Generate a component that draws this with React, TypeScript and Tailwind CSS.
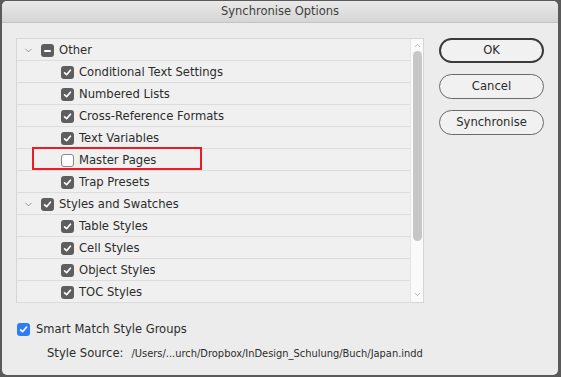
import { ChevronDown, ChevronUp } from 'lucide-react';

type Item = { label: string; checked: boolean };

const groups: { title: string; state: 'mixed' | 'checked'; items: Item[] }[] = [
    {
        title: 'Other',
        state: 'mixed',
        items: [
            { label: 'Conditional Text Settings', checked: true },
            { label: 'Numbered Lists', checked: true },
            { label: 'Cross-Reference Formats', checked: true },
            { label: 'Text Variables', checked: true },
            { label: 'Master Pages', checked: false },
            { label: 'Trap Presets', checked: true },
        ],
    },
    {
        title: 'Styles and Swatches',
        state: 'checked',
        items: [
            { label: 'Table Styles', checked: true },
            { label: 'Cell Styles', checked: true },
            { label: 'Object Styles', checked: true },
            { label: 'TOC Styles', checked: true },
        ],
    },
];

function Check({ state, blue }: { state: 'checked' | 'mixed' | 'off'; blue?: boolean }) {
    if (state === 'off') {
        return <span className="block w-[13px] h-[13px] rounded-[3px] border border-[#8a8a8a] bg-white shrink-0" />;
    }
    return (
        <span className={`w-[13px] h-[13px] rounded-[3px] flex items-center justify-center shrink-0 ${blue ? 'bg-[#2f7df6]' : 'bg-[#5e5e5e]'}`}>
            {state === 'mixed' ? (
                <span className="block w-[7px] h-[2px] bg-white rounded-[1px]" />
            ) : (
                <svg width="9" height="9" viewBox="0 0 9 9">
                    <path d="M1.6 4.8 L3.6 6.7 L7.4 2.2" fill="none" stroke="white" strokeWidth="1.7" strokeLinecap="round" strokeLinejoin="round" />
                </svg>
            )}
        </span>
    );
}

export default function App() {
    return (
        <div className="w-[561px] h-[377px] bg-[#5a5a5a] pl-[2px] pr-[3px] pt-px pb-[2px]" style={{ fontFamily: '"DejaVu Sans", sans-serif' }}>
            <div className="w-full h-full rounded-[5px] bg-[#ececec] overflow-hidden flex flex-col text-[#2c2c2c]">
                {/* Title bar */}
                <div className="h-[22px] shrink-0 bg-gradient-to-b from-[#e9e9e9] to-[#d5d5d5] border-b border-[#c4c4c4] flex items-center justify-center pt-px text-[11.5px] text-[#3e3e3e]">
                    Synchronise Options
                </div>

                <div className="flex pl-[14px] pt-[15px]">
                    {/* List */}
                    <div className="relative w-[408px] h-[265px] border border-[#d6d6d6] bg-[#f0f0f0] flex">
                        <div className="flex-1 flex flex-col text-[11.6px]">
                            {groups.map((g) => (
                                <div key={g.title}>
                                    <div className="h-[22px] flex items-center border-b border-[#dcdcdc] pt-[2px]">
                                        <ChevronDown size={11} strokeWidth={1.6} className="ml-[6px] text-[#777]" />
                                        <span className="ml-[7px]"><Check state={g.state} /></span>
                                        <span className="ml-[5px]">{g.title}</span>
                                    </div>
                                    {g.items.map((it) => (
                                        <div key={it.label} className="h-[22px] flex items-center border-b border-[#dcdcdc] pt-[2px]">
                                            <span className="ml-[44px]"><Check state={it.checked ? 'checked' : 'off'} /></span>
                                            <span className="ml-[5px]">{it.label}</span>
                                        </div>
                                    ))}
                                </div>
                            ))}
                        </div>
                        {/* Scrollbar */}
                        <div className="w-[13px] bg-[#fafafa] border-l border-[#e4e4e4] flex flex-col items-center">
                            <ChevronUp size={9} strokeWidth={1.5} className="mt-[2px] text-[#888]" />
                            <div className="mt-[1px] w-[9px] h-[190px] rounded-full bg-[#c6c6c6]" />
                            <div className="flex-1" />
                            <ChevronDown size={9} strokeWidth={1.5} className="mb-[3px] text-[#888]" />
                        </div>
                        {/* Highlight */}
                        <div className="absolute left-[15px] top-[108px] w-[170px] h-[23px] border-2 border-[#ec1c24]" />
                    </div>

                    {/* Buttons */}
                    <div className="ml-[15px] flex flex-col gap-[11px] text-[11.6px]">
                        <button className="w-[105px] h-[25px] rounded-full border-2 border-[#3a3a3a] bg-[#f1f1f1] flex items-center justify-center">OK</button>
                        <button className="w-[105px] h-[25px] rounded-full border border-[#6a6a6a] bg-[#f1f1f1] flex items-center justify-center">Cancel</button>
                        <button className="w-[105px] h-[25px] rounded-full border border-[#6a6a6a] bg-[#f1f1f1] flex items-center justify-center">Synchronise</button>
                    </div>
                </div>

                {/* Bottom options */}
                <div className="pl-[15px] mt-[18px] flex items-center text-[11.5px]">
                    <Check state="checked" blue />
                    <span className="ml-[6px]">Smart Match Style Groups</span>
                </div>
                <div className="pl-[45px] mt-[7px] flex items-baseline">
                    <span className="text-[11.6px]">Style Source:</span>
                    <span className="ml-[8px] text-[9.9px]">/Users/...urch/Dropbox/InDesign_Schulung/Buch/Japan.indd</span>
                </div>
            </div>
        </div>
    );
}
